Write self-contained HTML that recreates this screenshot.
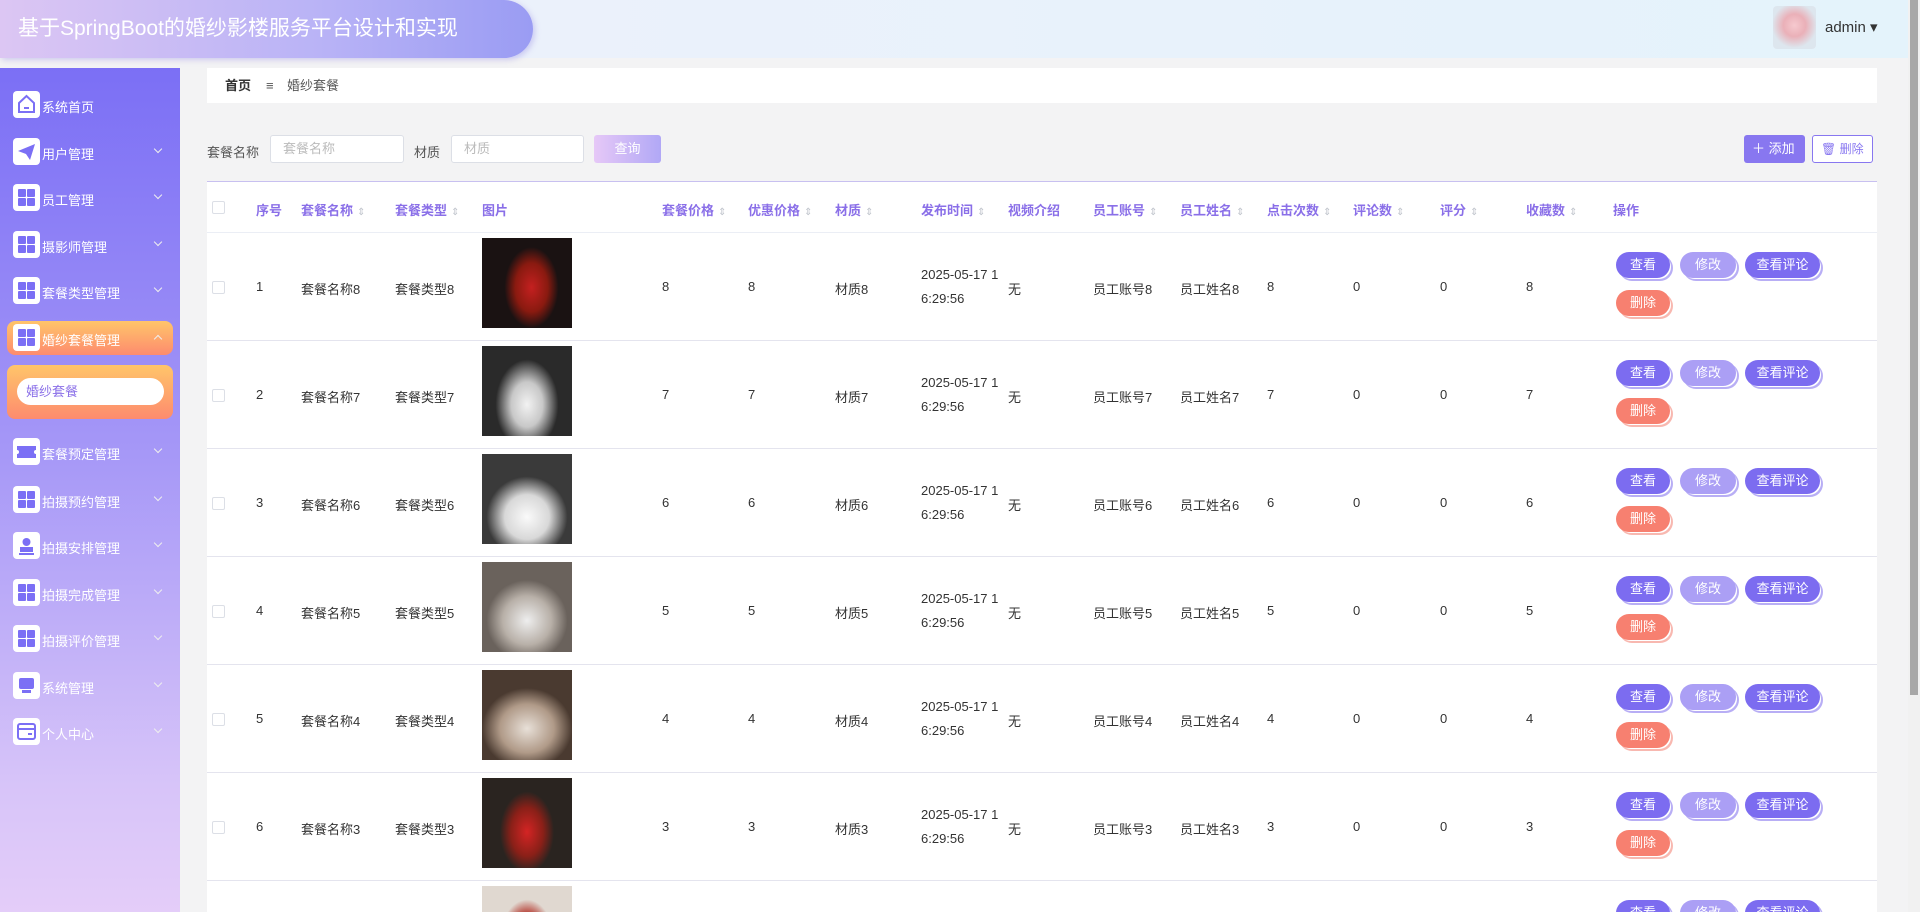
<!DOCTYPE html>
<html style="width:1920px;height:912px;overflow:hidden"><head><meta charset="utf-8">
<style>
*{margin:0;padding:0;box-sizing:border-box}
body{width:1920px;height:912px;overflow:hidden;background:#f3f3f4;font-family:"Liberation Sans","Noto Sans CJK SC",sans-serif;font-size:13px;color:#333;position:relative}
.hdr{position:absolute;left:0;top:0;width:1920px;height:58px;background:linear-gradient(90deg,#eef0fb,#e4f3fb)}
.title{position:absolute;left:0;top:0;width:533px;height:58px;border-radius:0 29px 29px 0;background:linear-gradient(90deg,#dcc6f3 0%,#b9b3f6 60%,#9a9cf3 100%);color:#fff;font-size:21px;line-height:58px;padding-left:18px;box-shadow:2px 2px 6px rgba(150,140,230,.4)}
.avatar{position:absolute;left:1773px;top:6px;width:43px;height:43px;border-radius:4px;background:radial-gradient(circle at 50% 45%,#f6c9cf 0,#eab0b8 35%,#dde6ee 70%)}
.admin{position:absolute;left:1825px;top:18px;font-size:15px;color:#333}
.side{position:absolute;left:0;top:68px;width:180px;height:844px;background:linear-gradient(180deg,#7b6ff5 0%,#a597f7 45%,#d7c4f9 85%,#e4cdf9 100%)}
.mi{position:absolute;left:0;width:180px;height:32px;color:#fff;font-size:13px}
.mi .ic{position:absolute;left:13px;top:2px;width:27px;height:27px;background:#fff;border-radius:4px}
.mi .ic i{position:absolute;width:8px;height:8px;background:#7b6ff5;border-radius:1px}
.mi .tx{position:absolute;left:42px;top:8px}
.mi .ch{position:absolute;left:155px;top:10px;width:6px;height:6px;border-right:1px solid #eee;border-bottom:1px solid #eee;transform:rotate(45deg)}
.mi .ch.up{transform:rotate(-135deg);top:14px}
.grid i:nth-child(1){left:5px;top:5px}.grid i:nth-child(2){left:14px;top:5px}.grid i:nth-child(3){left:5px;top:14px}.grid i:nth-child(4){left:14px;top:14px}
.act{position:absolute;left:7px;top:321px;width:166px;height:34px;border-radius:8px;background:linear-gradient(180deg,#ffc56a,#fd8b6e)}
.sub{position:absolute;left:7px;top:365px;width:166px;height:54px;border-radius:8px;background:linear-gradient(180deg,#ffc56a,#fd8b6e)}
.sub div{position:absolute;left:10px;top:13px;width:147px;height:27px;border-radius:14px;background:#fff;color:#8a6fe8;font-size:13px;line-height:27px;padding-left:9px}
.bc{position:absolute;left:207px;top:68px;width:1670px;height:35px;background:#fff;font-size:13px;line-height:35px}
.bc b{position:absolute;left:18px}.bc span{position:absolute;left:59px;color:#555}.bc em{position:absolute;left:80px;font-style:normal;color:#555}
.lbl{position:absolute;top:142px;font-size:13px;color:#555}
.inp{position:absolute;top:135px;height:28px;background:#fff;border:1px solid #dcdfe6;border-radius:3px;color:#bbb;font-size:13px;line-height:26px;padding-left:12px}
.btnq{position:absolute;left:594px;top:135px;width:67px;height:28px;border-radius:3px;background:linear-gradient(90deg,#e6c8f7,#b1a8f6);color:#fff;text-align:center;line-height:28px}
.add{position:absolute;left:1744px;top:135px;width:61px;height:28px;border-radius:3px;background:#8877f0;color:#fff;line-height:28px;padding-left:8px}
.del{position:absolute;left:1812px;top:135px;width:61px;height:28px;border-radius:3px;background:#fff;border:1px solid #8877f0;color:#8877f0;line-height:26px;padding-left:8px;font-size:12px}
.tbl{position:absolute;left:207px;top:181px;width:1670px;height:731px;overflow:hidden;background:#fff;border-top:1px solid #c8c0f0}
.th{position:absolute;top:0;left:0;width:1670px;height:51px;border-bottom:1px solid #ebeef5}
.th div{position:absolute;top:18px;color:#8a6fe8;font-weight:bold;font-size:13px}
.th div s{text-decoration:none;color:#c0c4cc;font-weight:normal;font-size:10px;margin-left:4px}
.cb{position:absolute;width:13px;height:13px;border:1px solid #dcdfe6;border-radius:2px;background:#fff}
.row{position:absolute;left:0;width:1670px;height:108px;border-bottom:1px solid #e4e4ee}
.row .c{position:absolute;top:46px}
.row .d{position:absolute;top:30px;line-height:24px}
.row .img{position:absolute;left:275px;top:5px;width:90px;height:90px}
.b{position:absolute;height:26px;border-radius:13px;color:#fff;text-align:center;line-height:26px;font-size:13px;box-shadow:2px 2px 0 -1px #fff,3px 3px 0 0 #b8aef5}
.b1{background:#7c6cf0;width:54px}.b2{background:#ab9ff5;width:56px}.b3{background:#7c6cf0;width:75px}.b4{background:#f78070;width:54px;box-shadow:2px 2px 0 -1px #fff,3px 3px 0 0 #f8b8b0}
.scroll{position:absolute;left:1908px;top:0;width:12px;height:912px;background:#f1f1f1}
.scroll div{position:absolute;left:2px;top:0;width:8px;height:695px;background:#a8a8a8}
</style></head><body>
<div class="hdr"></div>
<div class="title">基于SpringBoot的婚纱影楼服务平台设计和实现</div>
<div class="avatar"></div>
<div class="admin">admin ▾</div>

<div class="side"></div>
<div class="act"></div>
<div class="sub"><div>婚纱套餐</div></div>
<div class="mi" style="top:89px"><div class="ic"><svg width="27" height="27" viewBox="0 0 27 27"><path d="M6 12 L13.5 5 L21 12 V21 H6 Z" fill="none" stroke="#7b6ff5" stroke-width="2"/><path d="M11 17h5" stroke="#7b6ff5" stroke-width="2"/></svg></div><div class="tx">系统首页</div></div>
<div class="mi" style="top:136px"><div class="ic"><svg width="27" height="27" viewBox="0 0 27 27"><path d="M5 13 L22 6 L17 22 L13 16 Z" fill="#7b6ff5"/></svg></div><div class="tx">用户管理</div><div class="ch"></div></div>
<div class="mi" style="top:182px"><div class="ic grid"><i></i><i></i><i></i><i></i></div><div class="tx">员工管理</div><div class="ch"></div></div>
<div class="mi" style="top:229px"><div class="ic grid"><i></i><i></i><i></i><i></i></div><div class="tx">摄影师管理</div><div class="ch"></div></div>
<div class="mi" style="top:275px"><div class="ic grid"><i></i><i></i><i></i><i></i></div><div class="tx">套餐类型管理</div><div class="ch"></div></div>
<div class="mi" style="top:322px"><div class="ic grid"><i></i><i></i><i></i><i></i></div><div class="tx">婚纱套餐管理</div><div class="ch up"></div></div>
<div class="mi" style="top:436px"><div class="ic"><svg width="27" height="27" viewBox="0 0 27 27"><path d="M4 8h19v4a2 2 0 0 0 0 4v4H4v-4a2 2 0 0 0 0-4z" fill="#7b6ff5"/></svg></div><div class="tx">套餐预定管理</div><div class="ch"></div></div>
<div class="mi" style="top:484px"><div class="ic grid"><i></i><i></i><i></i><i></i></div><div class="tx">拍摄预约管理</div><div class="ch"></div></div>
<div class="mi" style="top:530px"><div class="ic"><svg width="27" height="27" viewBox="0 0 27 27"><circle cx="13.5" cy="10" r="4" fill="#7b6ff5"/><path d="M8 19h11v-3H8zM6 22h15" stroke="#7b6ff5" stroke-width="2" fill="#7b6ff5"/></svg></div><div class="tx">拍摄安排管理</div><div class="ch"></div></div>
<div class="mi" style="top:577px"><div class="ic grid"><i></i><i></i><i></i><i></i></div><div class="tx">拍摄完成管理</div><div class="ch"></div></div>
<div class="mi" style="top:623px"><div class="ic grid"><i></i><i></i><i></i><i></i></div><div class="tx">拍摄评价管理</div><div class="ch"></div></div>
<div class="mi" style="top:670px"><div class="ic"><svg width="27" height="27" viewBox="0 0 27 27"><rect x="6" y="6" width="15" height="11" rx="2" fill="#7b6ff5"/><rect x="9" y="18" width="9" height="3" fill="#7b6ff5"/></svg></div><div class="tx">系统管理</div><div class="ch"></div></div>
<div class="mi" style="top:716px"><div class="ic"><svg width="27" height="27" viewBox="0 0 27 27"><rect x="5" y="6" width="17" height="15" rx="2" fill="none" stroke="#7b6ff5" stroke-width="2"/><path d="M5 11h17M15 16h4" stroke="#7b6ff5" stroke-width="2"/></svg></div><div class="tx">个人中心</div><div class="ch"></div></div>

<div class="bc"><b>首页</b><span>≡</span><em>婚纱套餐</em></div>

<div class="lbl" style="left:207px">套餐名称</div>
<div class="inp" style="left:270px;width:134px">套餐名称</div>
<div class="lbl" style="left:414px">材质</div>
<div class="inp" style="left:451px;width:133px">材质</div>
<div class="btnq">查询</div>
<div class="add">＋ 添加</div>
<div class="del">🗑 删除</div>

<div class="tbl">
<div class="th">
<span class="cb" style="left:5px;top:19px"></span>
<div style="left:49px">序号</div>
<div style="left:94px">套餐名称<s>⇕</s></div>
<div style="left:188px">套餐类型<s>⇕</s></div>
<div style="left:275px">图片</div>
<div style="left:455px">套餐价格<s>⇕</s></div>
<div style="left:541px">优惠价格<s>⇕</s></div>
<div style="left:628px">材质<s>⇕</s></div>
<div style="left:714px">发布时间<s>⇕</s></div>
<div style="left:801px">视频介绍</div>
<div style="left:886px">员工账号<s>⇕</s></div>
<div style="left:973px">员工姓名<s>⇕</s></div>
<div style="left:1060px">点击次数<s>⇕</s></div>
<div style="left:1146px">评论数<s>⇕</s></div>
<div style="left:1233px">评分<s>⇕</s></div>
<div style="left:1319px">收藏数<s>⇕</s></div>
<div style="left:1406px">操作</div>
</div>

<div class="row" style="top:51px"><span class="cb" style="left:5px;top:48px"></span><div class="c" style="left:49px">1</div><div class="c" style="left:94px">套餐名称8</div><div class="c" style="left:188px">套餐类型8</div><div class="img" style="background:radial-gradient(ellipse 30% 45% at 55% 55%,#c42020,#8a1a10 60%,#1a1212 100%)"></div><div class="c" style="left:455px">8</div><div class="c" style="left:541px">8</div><div class="c" style="left:628px">材质8</div><div class="d" style="left:714px">2025-05-17 1<br>6:29:56</div><div class="c" style="left:801px">无</div><div class="c" style="left:886px">员工账号8</div><div class="c" style="left:973px">员工姓名8</div><div class="c" style="left:1060px">8</div><div class="c" style="left:1146px">0</div><div class="c" style="left:1233px">0</div><div class="c" style="left:1319px">8</div>
<div class="b b1" style="left:1409px;top:19px">查看</div><div class="b b2" style="left:1473px;top:19px">修改</div><div class="b b3" style="left:1538px;top:19px">查看评论</div><div class="b b4" style="left:1409px;top:57px">删除</div></div>

<div class="row" style="top:159px"><span class="cb" style="left:5px;top:48px"></span><div class="c" style="left:49px">2</div><div class="c" style="left:94px">套餐名称7</div><div class="c" style="left:188px">套餐类型7</div><div class="img" style="background:radial-gradient(ellipse 35% 50% at 50% 65%,#f2f2f2,#c8c8c8 50%,#2a2a2a 100%)"></div><div class="c" style="left:455px">7</div><div class="c" style="left:541px">7</div><div class="c" style="left:628px">材质7</div><div class="d" style="left:714px">2025-05-17 1<br>6:29:56</div><div class="c" style="left:801px">无</div><div class="c" style="left:886px">员工账号7</div><div class="c" style="left:973px">员工姓名7</div><div class="c" style="left:1060px">7</div><div class="c" style="left:1146px">0</div><div class="c" style="left:1233px">0</div><div class="c" style="left:1319px">7</div>
<div class="b b1" style="left:1409px;top:19px">查看</div><div class="b b2" style="left:1473px;top:19px">修改</div><div class="b b3" style="left:1538px;top:19px">查看评论</div><div class="b b4" style="left:1409px;top:57px">删除</div></div>

<div class="row" style="top:267px"><span class="cb" style="left:5px;top:48px"></span><div class="c" style="left:49px">3</div><div class="c" style="left:94px">套餐名称6</div><div class="c" style="left:188px">套餐类型6</div><div class="img" style="background:radial-gradient(ellipse 45% 45% at 50% 70%,#fafafa,#d8d8d8 55%,#3a3a3a 100%)"></div><div class="c" style="left:455px">6</div><div class="c" style="left:541px">6</div><div class="c" style="left:628px">材质6</div><div class="d" style="left:714px">2025-05-17 1<br>6:29:56</div><div class="c" style="left:801px">无</div><div class="c" style="left:886px">员工账号6</div><div class="c" style="left:973px">员工姓名6</div><div class="c" style="left:1060px">6</div><div class="c" style="left:1146px">0</div><div class="c" style="left:1233px">0</div><div class="c" style="left:1319px">6</div>
<div class="b b1" style="left:1409px;top:19px">查看</div><div class="b b2" style="left:1473px;top:19px">修改</div><div class="b b3" style="left:1538px;top:19px">查看评论</div><div class="b b4" style="left:1409px;top:57px">删除</div></div>

<div class="row" style="top:375px"><span class="cb" style="left:5px;top:48px"></span><div class="c" style="left:49px">4</div><div class="c" style="left:94px">套餐名称5</div><div class="c" style="left:188px">套餐类型5</div><div class="img" style="background:radial-gradient(ellipse 45% 45% at 50% 65%,#eee,#b8b0a8 60%,#6a625c 100%)"></div><div class="c" style="left:455px">5</div><div class="c" style="left:541px">5</div><div class="c" style="left:628px">材质5</div><div class="d" style="left:714px">2025-05-17 1<br>6:29:56</div><div class="c" style="left:801px">无</div><div class="c" style="left:886px">员工账号5</div><div class="c" style="left:973px">员工姓名5</div><div class="c" style="left:1060px">5</div><div class="c" style="left:1146px">0</div><div class="c" style="left:1233px">0</div><div class="c" style="left:1319px">5</div>
<div class="b b1" style="left:1409px;top:19px">查看</div><div class="b b2" style="left:1473px;top:19px">修改</div><div class="b b3" style="left:1538px;top:19px">查看评论</div><div class="b b4" style="left:1409px;top:57px">删除</div></div>

<div class="row" style="top:483px"><span class="cb" style="left:5px;top:48px"></span><div class="c" style="left:49px">5</div><div class="c" style="left:94px">套餐名称4</div><div class="c" style="left:188px">套餐类型4</div><div class="img" style="background:radial-gradient(ellipse 50% 45% at 50% 65%,#e8e0d8,#b09a88 60%,#4a3a30 100%)"></div><div class="c" style="left:455px">4</div><div class="c" style="left:541px">4</div><div class="c" style="left:628px">材质4</div><div class="d" style="left:714px">2025-05-17 1<br>6:29:56</div><div class="c" style="left:801px">无</div><div class="c" style="left:886px">员工账号4</div><div class="c" style="left:973px">员工姓名4</div><div class="c" style="left:1060px">4</div><div class="c" style="left:1146px">0</div><div class="c" style="left:1233px">0</div><div class="c" style="left:1319px">4</div>
<div class="b b1" style="left:1409px;top:19px">查看</div><div class="b b2" style="left:1473px;top:19px">修改</div><div class="b b3" style="left:1538px;top:19px">查看评论</div><div class="b b4" style="left:1409px;top:57px">删除</div></div>

<div class="row" style="top:591px"><span class="cb" style="left:5px;top:48px"></span><div class="c" style="left:49px">6</div><div class="c" style="left:94px">套餐名称3</div><div class="c" style="left:188px">套餐类型3</div><div class="img" style="background:radial-gradient(ellipse 30% 45% at 50% 60%,#d42424,#8a2018 60%,#2a2420 100%)"></div><div class="c" style="left:455px">3</div><div class="c" style="left:541px">3</div><div class="c" style="left:628px">材质3</div><div class="d" style="left:714px">2025-05-17 1<br>6:29:56</div><div class="c" style="left:801px">无</div><div class="c" style="left:886px">员工账号3</div><div class="c" style="left:973px">员工姓名3</div><div class="c" style="left:1060px">3</div><div class="c" style="left:1146px">0</div><div class="c" style="left:1233px">0</div><div class="c" style="left:1319px">3</div>
<div class="b b1" style="left:1409px;top:19px">查看</div><div class="b b2" style="left:1473px;top:19px">修改</div><div class="b b3" style="left:1538px;top:19px">查看评论</div><div class="b b4" style="left:1409px;top:57px">删除</div></div>

<div class="row" style="top:699px"><div class="img" style="background:radial-gradient(ellipse 30% 45% at 50% 60%,#d42424,#b02a20 60%,#e0d8d0 100%)"></div>
<div class="b b1" style="left:1409px;top:19px">查看</div><div class="b b2" style="left:1473px;top:19px">修改</div><div class="b b3" style="left:1538px;top:19px">查看评论</div></div>
</div>

<div class="scroll"><div></div></div>
</body></html>
